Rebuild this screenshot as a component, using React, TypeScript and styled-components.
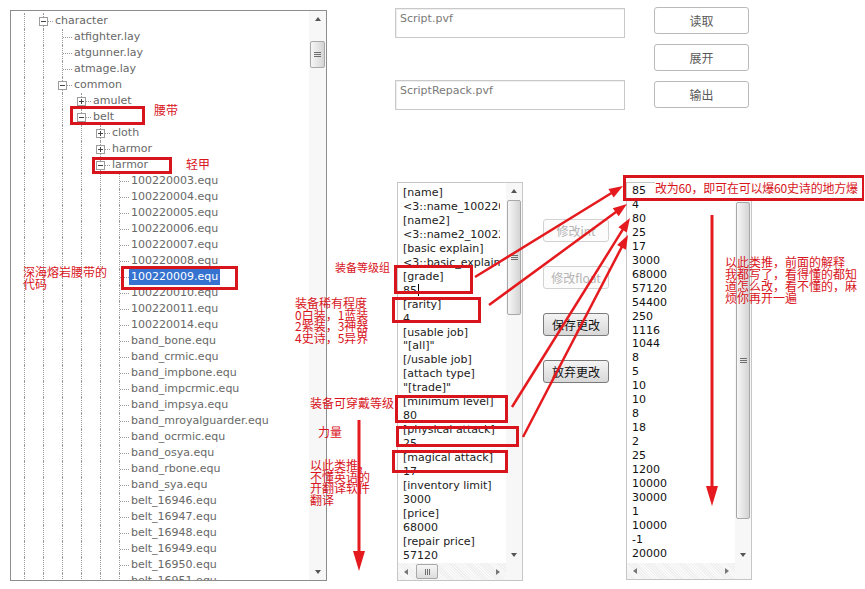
import React from 'react';
import styled, { createGlobalStyle, css } from 'styled-components';

const GlobalStyle = createGlobalStyle`
  html, body { margin: 0; padding: 0; background: #fff; }
  body { width: 865px; height: 589px; overflow: hidden; font-family: "DejaVu Sans", Verdana, sans-serif; }
  * { box-sizing: border-box; }
`;

const LATIN = `"DejaVu Sans", Verdana, sans-serif`;
const CJK = `"Noto Sans CJK SC", "DejaVu Sans", sans-serif`;
const RED = '#d8141c';

/* ---------- page ---------- */
const Page = styled.div`
  position: relative;
  width: 865px;
  height: 589px;
  display: flex;
  align-items: flex-start;
  padding: 7px 0 0 10px;
  background: #fff;
`;

/* ---------- scrollbars ---------- */
type Dir = 'up' | 'down' | 'left' | 'right';
const triangle = (d: Dir) => {
  switch (d) {
    case 'up': return css`border-left: 3.5px solid transparent; border-right: 3.5px solid transparent; border-bottom: 4px solid #555;`;
    case 'down': return css`border-left: 3.5px solid transparent; border-right: 3.5px solid transparent; border-top: 4px solid #555;`;
    case 'left': return css`border-top: 3.5px solid transparent; border-bottom: 3.5px solid transparent; border-right: 4px solid #777;`;
    default: return css`border-top: 3.5px solid transparent; border-bottom: 3.5px solid transparent; border-left: 4px solid #777;`;
  }
};

const ArrowBtn = styled.div<{ $dir: Dir }>`
  flex: none;
  width: ${p => (p.$dir === 'up' || p.$dir === 'down' ? '100%' : '16px')};
  height: ${p => (p.$dir === 'up' || p.$dir === 'down' ? '16px' : '100%')};
  display: flex;
  align-items: center;
  justify-content: center;
  &::before { content: ''; width: 0; height: 0; ${p => triangle(p.$dir)} }
`;

const VBar = styled.div<{ $w: number }>`
  width: ${p => p.$w}px;
  flex: none;
  display: flex;
  flex-direction: column;
  background: #f7f7f7;
`;

const HBar = styled.div`
  display: flex;
  flex-direction: row;
  background: #f6f6f6;
  background-image: repeating-linear-gradient(45deg, #efefef 0 1px, #fafafa 1px 2px);
`;

const Track = styled.div<{ $vertical?: boolean }>`
  flex: 1;
  display: flex;
  flex-direction: ${p => (p.$vertical ? 'column' : 'row')};
`;

const VThumb = styled.div<{ $top: number; $h: number }>`
  margin: ${p => p.$top}px 1px 0 1px;
  height: ${p => p.$h}px;
  border: 1px solid #a8a8a8;
  border-radius: 2px;
  background: linear-gradient(to right, #f6f6f6, #e2e2e2 60%, #d4d4d4);
  display: flex;
  align-items: center;
  justify-content: center;
  &::before {
    content: '';
    width: 7px;
    height: 5px;
    background: repeating-linear-gradient(to bottom, #6e6e6e 0 1px, transparent 1px 2px);
  }
`;

const HThumb = styled.div<{ $left: number; $w: number }>`
  margin: 1px 0 1px ${p => p.$left}px;
  width: ${p => p.$w}px;
  border: 1px solid #a8a8a8;
  border-radius: 2px;
  background: linear-gradient(to bottom, #f6f6f6, #dcdcdc);
  display: flex;
  align-items: center;
  justify-content: center;
  &::before {
    content: '';
    width: 5px;
    height: 6px;
    background: repeating-linear-gradient(to right, #6e6e6e 0 1px, transparent 1px 2px);
  }
`;

/* ---------- tree ---------- */
const TreePanel = styled.div`
  margin-top: 3px;
  width: 317px;
  height: 571px;
  border: 1px solid #8d8d8d;
  display: flex;
  flex: none;
  background: #fff;
`;

const TreeBody = styled.div`
  flex: 1;
  padding: 2px 0 0 4px;
  overflow: hidden;
`;

const Row = styled.div`
  display: flex;
  height: 16px;
  line-height: 16px;
  font-family: ${LATIN};
  font-size: 11px;
  color: #686868;
  white-space: nowrap;
`;

const Guide = styled.div`
  position: relative;
  flex: none;
  width: 19px;
  height: 16px;
  &::before {
    content: '';
    position: absolute;
    left: 9px;
    top: 0;
    bottom: 0;
    border-left: 1px dotted #9a9a9a;
  }
`;

const Connector = styled(Guide)`
  display: flex;
  align-items: center;
  padding-left: 5px;
  &::after {
    content: '';
    position: absolute;
    left: 10px;
    right: 0;
    top: 8px;
    border-top: 1px dotted #9a9a9a;
  }
`;

const Toggle = styled.div<{ $open: boolean }>`
  position: relative;
  z-index: 1;
  width: 9px;
  height: 9px;
  border: 1px solid #9c9c9c;
  background: #fff;
  &::before {
    content: '';
    position: absolute;
    left: 1px;
    top: 3px;
    width: 5px;
    height: 1px;
    background: #444;
  }
  ${p => !p.$open && css`
    &::after {
      content: '';
      position: absolute;
      left: 3px;
      top: 1px;
      width: 1px;
      height: 5px;
      background: #444;
    }
  `}
`;

const NodeLabel = styled.span<{ $selected?: boolean }>`
  padding: 0 2px;
  ${p => p.$selected && css`
    background: #3672cf;
    color: #fff;
  `}
`;

type TreeNode = { depth: number; kind: 'open' | 'closed' | 'leaf'; label: string; selected?: boolean };

const fileNames = [
  '100220003.equ', '100220004.equ', '100220005.equ', '100220006.equ', '100220007.equ',
  '100220008.equ', '100220009.equ', '100220010.equ', '100220011.equ', '100220014.equ',
  'band_bone.equ', 'band_crmic.equ', 'band_impbone.equ', 'band_impcrmic.equ', 'band_impsya.equ',
  'band_mroyalguarder.equ', 'band_ocrmic.equ', 'band_osya.equ', 'band_rbone.equ', 'band_sya.equ',
  'belt_16946.equ', 'belt_16947.equ', 'belt_16948.equ', 'belt_16949.equ', 'belt_16950.equ', 'belt_16951.equ',
];

const tree: TreeNode[] = [
  { depth: 1, kind: 'open', label: 'character' },
  { depth: 2, kind: 'leaf', label: 'atfighter.lay' },
  { depth: 2, kind: 'leaf', label: 'atgunner.lay' },
  { depth: 2, kind: 'leaf', label: 'atmage.lay' },
  { depth: 2, kind: 'open', label: 'common' },
  { depth: 3, kind: 'closed', label: 'amulet' },
  { depth: 3, kind: 'open', label: 'belt' },
  { depth: 4, kind: 'closed', label: 'cloth' },
  { depth: 4, kind: 'closed', label: 'harmor' },
  { depth: 4, kind: 'open', label: 'larmor' },
  ...fileNames.map(f => ({ depth: 5, kind: 'leaf' as const, label: f, selected: f === '100220009.equ' })),
];

/* ---------- right side ---------- */
const RightArea = styled.div`
  margin-left: 68px;
  display: flex;
  flex-direction: column;
`;

const TopSection = styled.div`
  display: flex;
  gap: 29px;
`;

const FieldCol = styled.div`
  width: 230px;
  padding-top: 1px;
  display: flex;
  flex-direction: column;
  gap: 42px;
`;

const FileField = styled.div`
  height: 30px;
  border: 1px solid #c9c9c9;
  box-shadow: inset 1px 1px 0 #efefef;
  padding: 3px 4px;
  font-family: ${LATIN};
  font-size: 11px;
  line-height: 13px;
  color: #7a7a7a;
`;

const ButtonCol = styled.div`
  display: flex;
  flex-direction: column;
  gap: 10px;
`;

const FlatButton = styled.div`
  width: 95px;
  height: 27px;
  border: 1px solid #bababa;
  border-radius: 3px;
  background: #fff;
  display: flex;
  align-items: center;
  justify-content: center;
  font-family: ${CJK};
  font-size: 12px;
  color: #5a5a5a;
`;

const BottomSection = styled.div`
  margin-top: 72px;
  display: flex;
  align-items: flex-start;
`;

const ScrollBox = styled.div<{ $h: number; $hbar: number }>`
  width: 126px;
  height: ${p => p.$h}px;
  border: 1px solid #c6c6c6;
  background: #fff;
  display: grid;
  grid-template-columns: 1fr 16px;
  grid-template-rows: 1fr ${p => p.$hbar}px;
`;

const EditorBox = styled(ScrollBox)`
  margin-left: 2px;
`;

const ListBox = styled(ScrollBox)`
  margin-left: 17px;
`;

const Lines = styled.div<{ $pt: number; $color: string }>`
  overflow: hidden;
  margin-right: 6px;
  padding: ${p => p.$pt}px 0 0 5px;
  font-family: ${LATIN};
  font-size: 11px;
  line-height: 13.95px;
  color: ${p => p.$color};
  white-space: pre;
`;

const Caret = styled.span`
  display: inline-block;
  width: 1px;
  height: 12px;
  margin-left: 1px;
  vertical-align: -2px;
  background: #000;
`;

const Corner = styled.div`
  background: #f7f7f7;
`;

const ActionCol = styled.div`
  margin-left: 20px;
  width: 66px;
  padding-top: 37px;
  display: flex;
  flex-direction: column;
  gap: 24px;
`;

const ActionButton = styled.div<{ $disabled?: boolean }>`
  height: 23px;
  border-radius: 3px;
  display: flex;
  align-items: center;
  justify-content: center;
  font-family: ${CJK};
  font-size: 12px;
  white-space: nowrap;
  overflow: hidden;
  ${p => p.$disabled
    ? css`
      border: 1px solid #d2d2d2;
      background: #fcfcfc;
      color: #b4b4b4;
    `
    : css`
      border: 1px solid #7a7a7a;
      background: linear-gradient(to bottom, #f4f4f4, #e6e6e6 50%, #d8d8d8);
      color: #111;
    `}
`;

/* ---------- annotations ---------- */
const Overlay = styled.div`
  position: absolute;
  inset: 0;
  pointer-events: none;
`;

const Frame = styled.div<{ $x: number; $y: number; $w: number; $h: number }>`
  position: absolute;
  left: ${p => p.$x}px;
  top: ${p => p.$y}px;
  width: ${p => p.$w}px;
  height: ${p => p.$h}px;
  border: 3px solid ${RED};
`;

const CalloutFrame = styled(Frame)`
  display: flex;
  align-items: center;
  padding-left: 29px;
`;

const CalloutText = styled.span`
  height: 20px;
  line-height: 20px;
  padding-right: 4px;
  background: #fff;
  font-family: ${CJK};
  font-size: 12px;
  letter-spacing: -0.2px;
  color: ${RED};
  white-space: nowrap;
`;

const Note = styled.div<{ $x: number; $y: number; $size?: number; $lh?: number }>`
  position: absolute;
  left: ${p => p.$x}px;
  top: ${p => p.$y}px;
  font-family: ${CJK};
  font-size: ${p => p.$size ?? 12}px;
  line-height: ${p => p.$lh ?? 12}px;
  color: ${RED};
  white-space: pre;
`;

const ArrowLayer = styled.svg`
  position: absolute;
  left: 0;
  top: 0;
`;

function Arrow({ x1, y1, x2, y2, w = 2.5, head = 14, hw = 10 }: { x1: number; y1: number; x2: number; y2: number; w?: number; head?: number; hw?: number }) {
  const dx = x2 - x1;
  const dy = y2 - y1;
  const len = Math.hypot(dx, dy);
  const ux = dx / len;
  const uy = dy / len;
  const bx = x2 - ux * head;
  const by = y2 - uy * head;
  const nx = -uy;
  const ny = ux;
  const pts = `${x2},${y2} ${bx + (nx * hw) / 2},${by + (ny * hw) / 2} ${bx - (nx * hw) / 2},${by - (ny * hw) / 2}`;
  return (
    <g>
      <line x1={x1} y1={y1} x2={bx + ux * 2} y2={by + uy * 2} stroke="#e51a1e" strokeWidth={w} />
      <polygon points={pts} fill="#e51a1e" />
    </g>
  );
}

const editorLines = [
  '[name]', '<3::name_100220009>`', '[name2]', '<3::name2_100220009>`', '[basic explain]', '<3::basic_explain_100220009>`',
  '[grade]', '85', '[rarity]', '4', '[usable job]', '"[all]"', '[/usable job]', '[attach type]', '"[trade]"',
  '[minimum level]', '80', '[physical attack]', '25', '[magical attack]', '17', '[inventory limit]', '3000',
  '[price]', '68000', '[repair price]', '57120',
];

const values = ['85', '4', '80', '25', '17', '3000', '68000', '57120', '54400', '250', '1116', '1044', '8', '5', '10', '10', '8', '18', '2', '25', '1200', '10000', '30000', '1', '10000', '-1', '20000'];

export default function App() {
  return (
    <>
      <GlobalStyle />
      <Page>
        <TreePanel>
          <TreeBody>
            {tree.map((n, i) => (
              <Row key={i}>
                {Array.from({ length: n.depth }).map((_, k) => <Guide key={k} />)}
                <Connector>{n.kind !== 'leaf' && <Toggle $open={n.kind === 'open'} />}</Connector>
                <NodeLabel $selected={n.selected}>{n.label}</NodeLabel>
              </Row>
            ))}
          </TreeBody>
          <VBar $w={17}>
            <ArrowBtn $dir="up" />
            <Track $vertical>
              <VThumb $top={14} $h={27} />
            </Track>
            <ArrowBtn $dir="down" />
          </VBar>
        </TreePanel>

        <RightArea>
          <TopSection>
            <FieldCol>
              <FileField>Script.pvf</FileField>
              <FileField>ScriptRepack.pvf</FileField>
            </FieldCol>
            <ButtonCol>
              <FlatButton>读取</FlatButton>
              <FlatButton>展开</FlatButton>
              <FlatButton>输出</FlatButton>
            </ButtonCol>
          </TopSection>

          <BottomSection>
            <EditorBox $h={399} $hbar={17}>
              <Lines $pt={3} $color="#222">
                {editorLines.map((l, i) => (
                  <div key={i}>{l}{i === 7 && <Caret />}</div>
                ))}
              </Lines>
              <VBar $w={16}>
                <ArrowBtn $dir="up" />
                <Track $vertical>
                  <VThumb $top={1} $h={115} />
                </Track>
                <ArrowBtn $dir="down" />
              </VBar>
              <HBar>
                <ArrowBtn $dir="left" />
                <Track>
                  <HThumb $left={2} $w={22} />
                </Track>
                <ArrowBtn $dir="right" />
              </HBar>
              <Corner />
            </EditorBox>

            <ActionCol>
              <ActionButton $disabled>修改int</ActionButton>
              <ActionButton $disabled>修改float</ActionButton>
              <ActionButton>保存更改</ActionButton>
              <ActionButton>放弃更改</ActionButton>
            </ActionCol>

            <ListBox $h={398} $hbar={16}>
              <Lines $pt={1} $color="#111">
                {values.map((v, i) => <div key={i}>{v}</div>)}
              </Lines>
              <VBar $w={16}>
                <ArrowBtn $dir="up" />
                <Track $vertical>
                  <VThumb $top={3} $h={317} />
                </Track>
                <ArrowBtn $dir="down" />
              </VBar>
              <HBar>
                <ArrowBtn $dir="left" />
                <Track />
                <ArrowBtn $dir="right" />
              </HBar>
              <Corner />
            </ListBox>
          </BottomSection>
        </RightArea>

        <Overlay>
          <Frame $x={70} $y={106} $w={75} $h={19} />
          <Note $x={154} $y={104}>腰带</Note>
          <Frame $x={92} $y={157} $w={80} $h={17} />
          <Note $x={186} $y={158}>轻甲</Note>
          <Frame $x={121} $y={266} $w={117} $h={24} />
          <Note $x={23} $y={266} $lh={11.5}>{'深海熔岩腰带的\n代码'}</Note>

          <Note $x={335} $y={261} $size={11}>装备等级组</Note>
          <Frame $x={394} $y={265} $w={79} $h={29} />
          <Note $x={295} $y={297} $lh={11.7}>{'装备稀有程度\n0白装，1蓝装\n2紫装，3神器\n4史诗，5异界'}</Note>
          <Frame $x={392} $y={297} $w={89} $h={26} />
          <Note $x={310} $y={397}>装备可穿戴等级</Note>
          <Frame $x={395} $y={395} $w={113} $h={28} />
          <Note $x={318} $y={426}>力量</Note>
          <Frame $x={396} $y={426} $w={123} $h={21} />
          <Frame $x={392} $y={450} $w={116} $h={23} />
          <Note $x={310} $y={459} $lh={11.7}>{'以此类推，\n不懂英语的\n开翻译软件\n翻译'}</Note>

          <CalloutFrame $x={623} $y={175} $w={241} $h={26}>
            <CalloutText>改为60，即可在可以爆60史诗的地方爆</CalloutText>
          </CalloutFrame>
          <Note $x={725} $y={256}>{'以此类推，前面的解释\n我都写了，看得懂的都知\n道怎么改，看不懂的，麻\n烦你再开一遍'}</Note>

          <ArrowLayer width={865} height={589} viewBox="0 0 865 589">
            <Arrow x1={475} y1={277} x2={623} y2={186} />
            <Arrow x1={489} y1={305} x2={627} y2={204} />
            <Arrow x1={512} y1={407} x2={630} y2={218} />
            <Arrow x1={523} y1={437} x2={628} y2={235} />
            <Arrow x1={359} y1={420} x2={359} y2={571} w={3} head={20} hw={12} />
            <Arrow x1={712} y1={215} x2={712} y2={506} w={3} head={20} hw={12} />
          </ArrowLayer>
        </Overlay>
      </Page>
    </>
  );
}
